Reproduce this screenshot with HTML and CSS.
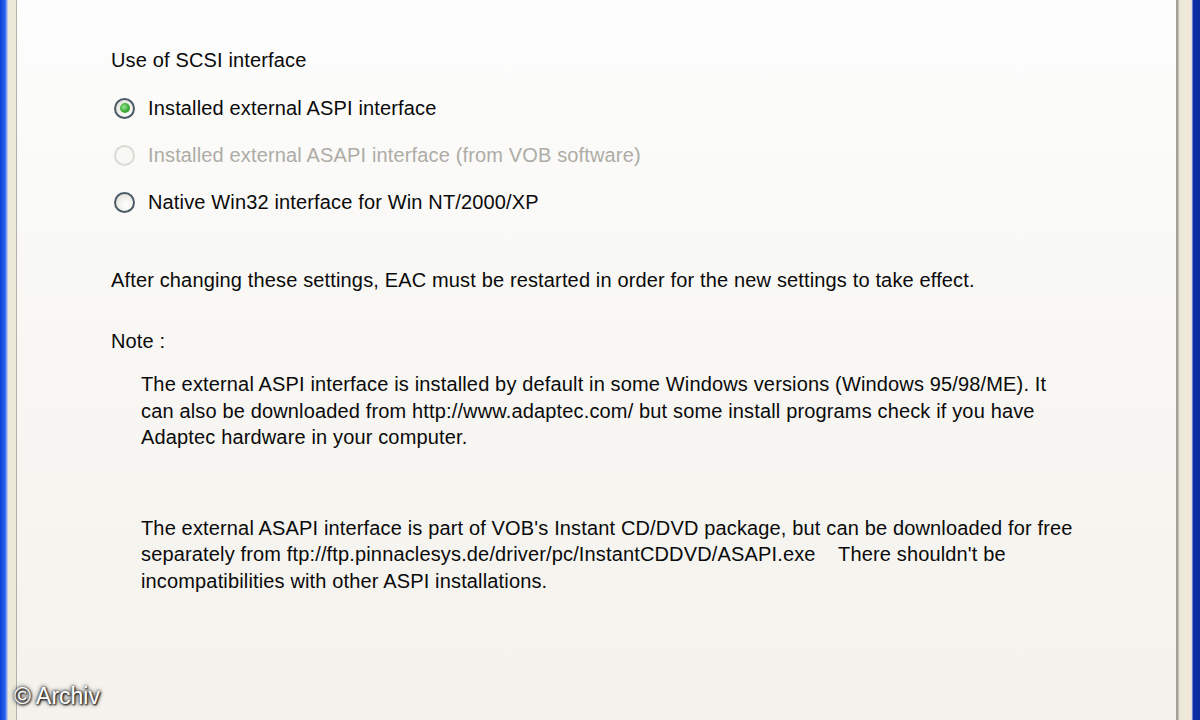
FILE: index.html
```html
<!DOCTYPE html>
<html>
<head>
<meta charset="utf-8">
<link rel="stylesheet" href="styles.css">
</head>
<body>
<div class="frame">
  <div class="edge-left"></div>
  <div class="panel">
    <div class="group-title">Use of SCSI interface</div>
    <div class="radios">
      <div class="radio checked"><span class="dot"></span><span class="label">Installed external ASPI interface</span></div>
      <div class="radio disabled"><span class="dot"></span><span class="label">Installed external ASAPI interface (from VOB software)</span></div>
      <div class="radio"><span class="dot"></span><span class="label">Native Win32 interface for Win NT/2000/XP</span></div>
    </div>
    <p class="restart">After changing these settings, EAC must be restarted in order for the new settings to take effect.</p>
    <p class="note">Note :</p>
    <p class="para p1">The external ASPI interface is installed by default in some Windows versions (Windows 95/98/ME). It<br>can also be downloaded from http://www.adaptec.com/ but some install programs check if you have<br>Adaptec hardware in your computer.</p>
    <p class="para p2">The external ASAPI interface is part of VOB's Instant CD/DVD package, but can be downloaded for free<br>separately from ftp://ftp.pinnaclesys.de/driver/pc/InstantCDDVD/ASAPI.exe&nbsp;&nbsp;&nbsp; There shouldn't be<br>incompatibilities with other ASPI installations.</p>
  </div>
  <div class="edge-right"></div>
  <div class="credit">© Archiv</div>
</div>
</body>
</html>
```
FILE: styles.css
```css
html, body {
  margin: 0;
  padding: 0;
}
body {
  width: 1200px;
  height: 720px;
  overflow: hidden;
  font-family: "Liberation Sans", Arial, sans-serif;
  color: #0a0a0a;
}
.frame {
  position: relative;
  display: flex;
  width: 1200px;
  height: 720px;
}
.edge-left {
  width: 17px;
  flex: none;
  background: linear-gradient(to right, #0a3fd6 0, #2a62ee 5px, #8fb0f0 7px, #ece9d8 8px, #ece9d8 16px, #c9c6bb 16px, #9d9b94 17px);
}
.edge-right {
  width: 24px;
  flex: none;
  background: linear-gradient(to right, #9d9b94 0, #a7a69f 2px, #dedbd0 3px, #ece9d8 4px, #f0e8d8 15px, #c8d4ee 16px, #0c2fa8 17px, #0a2b9c 24px);
}
.panel {
  flex: 1;
  background: linear-gradient(to bottom, #fdfdfd 0%, #f7f6f2 55%, #f4f2ed 100%);
  padding: 47px 0 0 94px;
  font-size: 20px;
  line-height: 26px;
  letter-spacing: 0.15px;
}
.group-title {
  margin: 0;
}
.radios {
  margin-top: 22px;
  display: flex;
  flex-direction: column;
  gap: 21px;
}
.radio {
  display: flex;
  align-items: center;
  height: 26px;
}
.dot {
  box-sizing: border-box;
  width: 21px;
  height: 21px;
  border-radius: 50%;
  border: 2px solid #4a5a66;
  background: radial-gradient(circle at 60% 65%, #ffffff 0, #f0f0ea 50%, #d6d6cc 100%);
  margin-left: 3px;
  margin-right: 13px;
  position: relative;
  flex: none;
}
.checked .dot::after {
  content: "";
  position: absolute;
  left: 3.5px;
  top: 3.5px;
  width: 10px;
  height: 10px;
  border-radius: 50%;
  background: radial-gradient(circle at 40% 40%, #9ae696 0, #3fae3a 50%, #2b8f28 100%);
}
.disabled .dot {
  border-color: #dcdad2;
  background: #f8f8f5;
}
.disabled .label {
  color: #aeaca6;
}
.restart {
  margin: 52px 0 0 0;
}
.note {
  margin: 35px 0 0 0;
}
.para {
  margin: 17px 0 0 30px;
  line-height: 26.5px;
}
.p2 {
  margin-top: 64px;
}
.credit {
  position: absolute;
  left: 14px;
  top: 683px;
  font-family: "Liberation Sans", Arial, sans-serif;
  font-size: 23px;
  color: #ffffff;
  text-shadow: 0 0 3px #222, 0 0 5px #333, 1px 1px 2px #000;
}
```
